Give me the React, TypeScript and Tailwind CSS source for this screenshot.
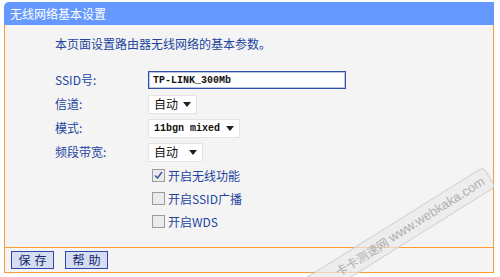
import React from "react";

const FONT = '"Noto Sans CJK SC", "Liberation Sans", sans-serif';
const MONO = '"Liberation Mono", "Noto Sans CJK SC", monospace';

function Arrow() {
  return (
    <svg width="8" height="5" viewBox="0 0 8 5" className="shrink-0">
      <path d="M0 0 H8 L4 5 Z" fill="#222" />
    </svg>
  );
}

function FakeSelect({ label, width, mono }: { label: string; width: string; mono?: boolean }) {
  return (
    <div
      className={`flex items-center justify-between h-[19px] ${width} bg-white border border-[#e4e4e4] pl-[5px] pr-[5px] text-[12px] text-[#111] whitespace-nowrap`}
      style={{ fontFamily: mono ? MONO : FONT }}
    >
      <span className={mono ? "text-[10px] font-bold" : ""}>{label}</span>
      <Arrow />
    </div>
  );
}

function Row({ label, children }: { label: string; children: React.ReactNode }) {
  return (
    <div className="flex items-center h-[24px]">
      <span className="w-[93px] text-[12px] text-[#2244a0]">{label}</span>
      {children}
    </div>
  );
}

function Check({ checked, label }: { checked?: boolean; label: string }) {
  return (
    <div className="flex items-center h-[23px] pl-[97px]">
      <span className="flex items-center justify-center w-[13px] h-[13px] border border-[#9c9c9c] bg-[#ebebeb]">
        {checked && (
          <svg width="9" height="9" viewBox="0 0 9 9">
            <path d="M1 4.5 L3.5 7 L8 1" fill="none" stroke="#4a5f9a" strokeWidth="1.6" />
          </svg>
        )}
      </span>
      <span className="ml-[3px] text-[12px] text-[#2244a0]">{label}</span>
    </div>
  );
}

export default function App() {
  return (
    <div className="relative w-[500px] h-[277px] bg-white overflow-hidden" style={{ fontFamily: FONT }}>
      <div className="ml-[4px] mt-[2px] w-[490px] flex flex-col">
        {/* Header */}
        <div className="h-[23px] bg-[#6699ff] rounded-tl-[5px] flex items-center pl-[6px] text-[12px] text-white">
          无线网络基本设置
        </div>

        {/* Body */}
        <div className="h-[222px] bg-[#f4f4f4] border-x border-[#ff9933] pl-[50px] pt-[10px]">
          <div className="h-[18px] flex items-center text-[12px] text-[#2244a0]">
            本页面设置路由器无线网络的基本参数。
          </div>
          <div className="mt-[15px]">
            <Row label="SSID号:">
              <div
                className="flex items-center w-[198px] h-[18px] bg-white border border-[#3050a8] pl-[4px] text-[10px] font-bold text-[#111]"
                style={{ fontFamily: MONO, boxShadow: "inset 0 0 0 1px #b9c6e6" }}
              >
                TP-LINK_300Mb
              </div>
            </Row>
            <Row label="信道:">
              <FakeSelect label="自动" width="w-[49px]" />
            </Row>
            <Row label="模式:">
              <FakeSelect label="11bgn mixed" width="w-[92px]" mono />
            </Row>
            <Row label="频段带宽:">
              <FakeSelect label="自动" width="w-[55px]" />
            </Row>
          </div>
          <Check checked label="开启无线功能" />
          <Check label="开启SSID广播" />
          <Check label="开启WDS" />
        </div>

        {/* Footer */}
        <div className="h-[26px] bg-[#f4f4f4] border border-[#ff9933] flex items-start pt-[3px] pl-[6px] gap-[11px]">
          <button className="w-[43px] h-[18px] bg-[#d5ddf2] border border-[#3346a6] text-[12px] text-[#14256b] tracking-[4px] pl-[4px] leading-none">
            保存
          </button>
          <button className="w-[43px] h-[18px] bg-[#d5ddf2] border border-[#3346a6] text-[12px] text-[#14256b] tracking-[4px] pl-[4px] leading-none">
            帮助
          </button>
        </div>
      </div>

      {/* Watermark */}
      <div
        className="absolute left-[290px] top-[222px] w-[216px] h-[24px] rounded-[5px] border border-[#cfcfcf] bg-[#e9e9e9]/70 flex items-center justify-end pr-[6px] gap-[3px] text-[#b0b0b0] whitespace-nowrap"
        style={{ transform: "rotate(-32deg)" }}
      >
        <span className="text-[12px]">卡卡测速网</span>
        <span className="text-[13px]" style={{ fontFamily: '"Liberation Sans", sans-serif' }}>
          www.webkaka.com
        </span>
      </div>
    </div>
  );
}
